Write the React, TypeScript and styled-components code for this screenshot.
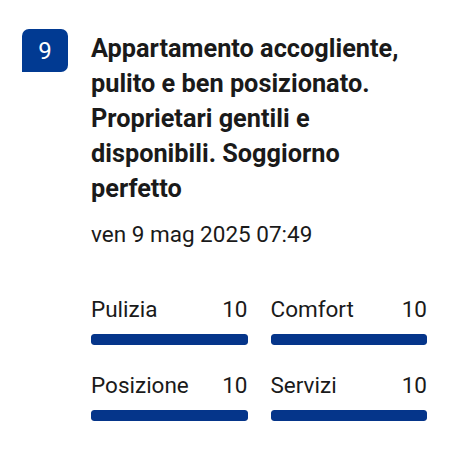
import React from 'react';
import styled, { createGlobalStyle } from 'styled-components';

interface Score {
  label: string;
  value: number;
}

const scores: Score[] = [
  { label: 'Pulizia', value: 10 },
  { label: 'Comfort', value: 10 },
  { label: 'Posizione', value: 10 },
  { label: 'Servizi', value: 10 },
];

const GlobalStyle = createGlobalStyle`
  html, body {
    margin: 0;
    padding: 0;
    background: #ffffff;
  }
  body {
    font-family: Roboto, "Noto Sans", Arial, sans-serif;
    color: #1a1a1a;
  }
`

const ReviewCard = styled.div`
  display: flex;
  align-items: flex-start;
  gap: 23px;
  padding: 29px 23px 0 22px;
`

const ScoreBadge = styled.div`
  flex: none;
  width: 46px;
  height: 43px;
  background: #013a92;
  color: #ffffff;
  border-radius: 7px 7px 7px 0;
  display: flex;
  align-items: center;
  justify-content: center;
  font-size: 24px;
`

const Body = styled.div`
  flex: 1;
  margin-top: 2px;
`

const Title = styled.p`
  margin: 0;
  font-size: 25.3px;
  font-weight: 700;
  line-height: 35px;
`

const DateLine = styled.p`
  margin: 13px 0 0;
  font-size: 22.5px;
  line-height: 30px;
`

const ScoreGrid = styled.div`
  display: grid;
  grid-template-columns: 1fr 1fr;
  column-gap: 23px;
  row-gap: 27px;
  margin-top: 47px;
`

const ScoreItem = styled.div`
  display: flex;
  flex-direction: column;
  gap: 12px;
`

const ScoreHead = styled.div`
  display: flex;
  justify-content: space-between;
  font-size: 22.5px;
  line-height: 26px;
`

const Track = styled.div`
  height: 11px;
  border-radius: 3px;
  background: #e7e7e7;
  overflow: hidden;
`

const Fill = styled.div`
  height: 100%;
  background: #05358a;
  border-radius: 3px;
`

const App: React.FC = () => {
  return (
    <>
      <GlobalStyle />
      <ReviewCard>
        <ScoreBadge>9</ScoreBadge>
        <Body>
          <Title>
            Appartamento accogliente, pulito e ben posizionato. Proprietari gentili e disponibili. Soggiorno perfetto
          </Title>
          <DateLine>ven 9 mag 2025 07:49</DateLine>
          <ScoreGrid>
            {scores.map((s) => (
              <ScoreItem key={s.label}>
                <ScoreHead>
                  <span>{s.label}</span>
                  <span>{s.value}</span>
                </ScoreHead>
                <Track>
                  <Fill style={{ width: `${s.value * 10}%` }} />
                </Track>
              </ScoreItem>
            ))}
          </ScoreGrid>
        </Body>
      </ReviewCard>
    </>
  );
}

export default App;
